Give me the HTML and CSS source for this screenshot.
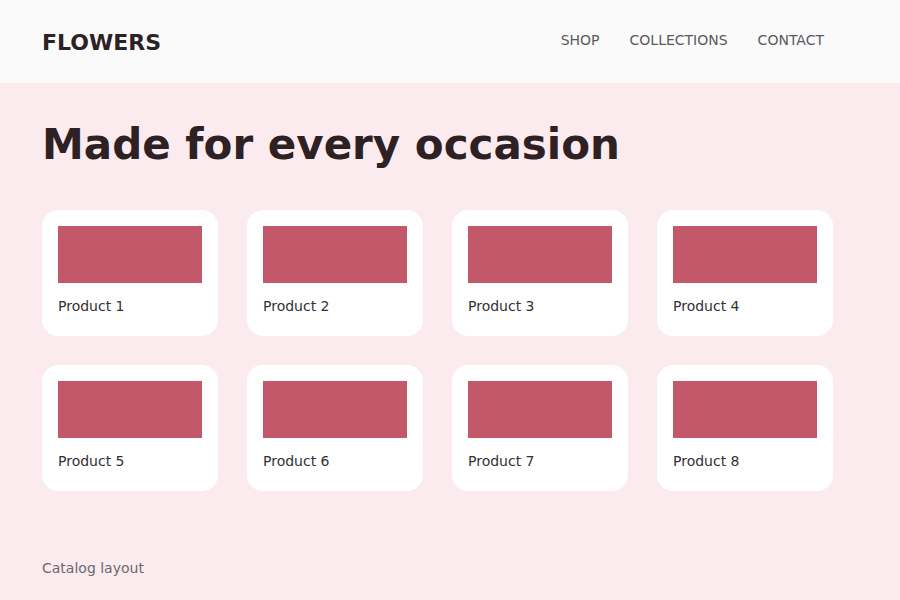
FILE: index.html
```html
<!DOCTYPE html>
<html lang="en">
<head>
<meta charset="utf-8">
<title>Flowers</title>
<link rel="stylesheet" href="styles.css">
</head>
<body>
<header class="site-header">
  <div class="brand">FLOWERS</div>
  <nav class="nav">
    <a href="#">SHOP</a>
    <a href="#">COLLECTIONS</a>
    <a href="#">CONTACT</a>
  </nav>
</header>
<main class="main">
  <h1 class="title">Made for every occasion</h1>
  <div class="grid">
    <div class="card"><div class="thumb"></div><div class="name">Product 1</div></div>
    <div class="card"><div class="thumb"></div><div class="name">Product 2</div></div>
    <div class="card"><div class="thumb"></div><div class="name">Product 3</div></div>
    <div class="card"><div class="thumb"></div><div class="name">Product 4</div></div>
    <div class="card"><div class="thumb"></div><div class="name">Product 5</div></div>
    <div class="card"><div class="thumb"></div><div class="name">Product 6</div></div>
    <div class="card"><div class="thumb"></div><div class="name">Product 7</div></div>
    <div class="card"><div class="thumb"></div><div class="name">Product 8</div></div>
  </div>
  <footer class="footer">Catalog layout</footer>
</main>
</body>
</html>
```
FILE: styles.css
```css
html, body {
  margin: 0;
  padding: 0;
}
body {
  font-family: "DejaVu Sans", sans-serif;
  background: #fbebee;
  width: 900px;
  height: 600px;
  overflow: hidden;
}
.site-header {
  height: 83px;
  background: #fafafa;
  display: flex;
  align-items: center;
  justify-content: space-between;
  padding: 0 76px 0 42px;
  box-sizing: border-box;
}
.brand {
  font-size: 22px;
  font-weight: bold;
  color: #2d2124;
  margin-top: 1px;
}
.nav {
  display: flex;
  gap: 30px;
  margin-top: -3px;
}
.nav a {
  font-size: 14px;
  color: #5b5960;
  text-decoration: none;
}
.main {
  padding: 37px 42px 0;
}
.title {
  margin: 0 0 41px;
  font-size: 42px;
  font-weight: bold;
  line-height: normal;
  color: #2d2124;
}
.grid {
  display: grid;
  grid-template-columns: repeat(4, 176px);
  column-gap: 29px;
  row-gap: 29px;
}
.card {
  background: #ffffff;
  border-radius: 16px;
  height: 126px;
  box-sizing: border-box;
  padding: 16px;
}
.thumb {
  height: 57px;
  background: #c2586a;
}
.name {
  margin-top: 15px;
  font-size: 14px;
  color: #333036;
}
.footer {
  margin-top: 69px;
  font-size: 14px;
  color: #6b6870;
}
```
